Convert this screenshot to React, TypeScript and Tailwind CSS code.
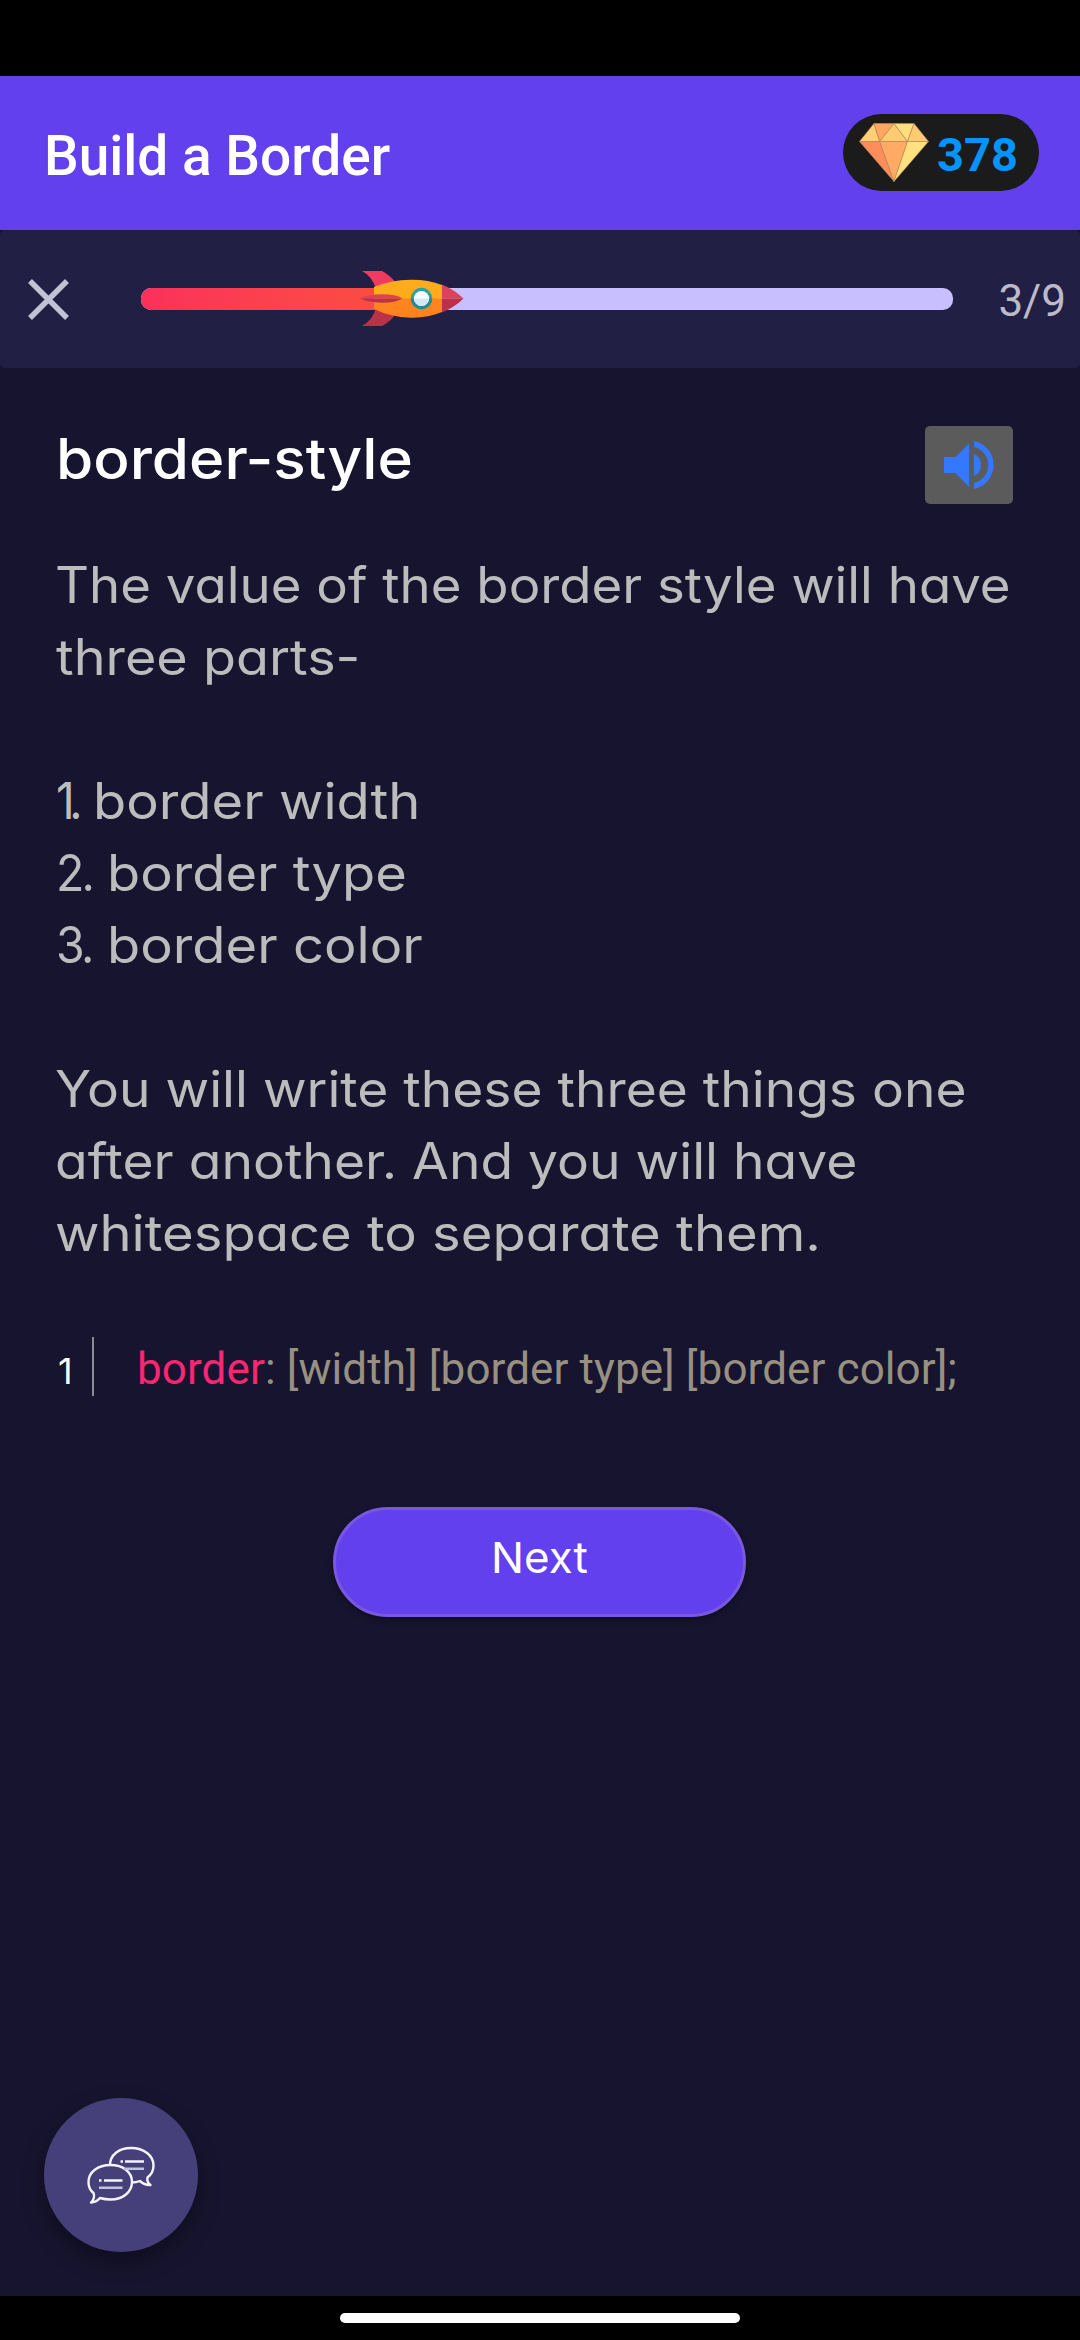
const inter = "font-['Inter','Noto_Sans',sans-serif] [font-feature-settings:'cv11'] whitespace-pre";

function Gem() {
  return (
    <svg className="h-[59px] w-[70px]" viewBox="0 0 70 59">
      <g stroke="#b98a55" strokeWidth="0.6" strokeLinejoin="round">
        <path d="M0.5 18.5 15 .5 20.7 18.5Z" fill="#ffcf76" />
        <path d="M15 .5H35L20.7 18.5Z" fill="#ffa762" />
        <path d="M35 .5 48.5 18.5H20.7Z" fill="#ffcb70" />
        <path d="M35 .5H55L48.5 18.5Z" fill="#ffdf7d" />
        <path d="M55 .5 69.5 18.5H48.5Z" fill="#ffcb70" />
        <path d="M.5 18.5H20.7L35 58.5Z" fill="#ff8d5a" />
        <path d="M20.7 18.5H48.5L35 58.5Z" fill="#ffab66" />
        <path d="M48.5 18.5H69.5L35 58.5Z" fill="#ffe180" />
      </g>
    </svg>
  );
}

function Rocket() {
  return (
    <svg className="absolute -top-[17px] left-[219px] h-[55px] w-[104px]" viewBox="0 0 104 55">
      <path d="M2 0H22Q30 4 36 12L16 18Q12 5 2 0Z" fill="#f03a5f" />
      <path d="M2 55H22Q30 51 36 43L16 37Q12 50 2 55Z" fill="#b93248" />
      <path d="M14 16Q30 9 51 8.700Q68 8.500 82 14V28H14Z" fill="#ffac1c" />
      <path d="M14 27.500H82V41Q68 47 51 46.700Q30 46 14 38Z" fill="#ff8420" />
      <path d="M82 13.500Q95 19 103.500 27.500H82Z" fill="#dd4259" />
      <path d="M82 41.500Q95 36 103.500 27.500H82Z" fill="#b93248" />
      <path d="M0 27.500Q8 23.500 22 23.300Q36 23.300 42.500 27.500Z" fill="#dd4259" />
      <path d="M0 27.500Q8 31.500 22 31.700Q36 31.700 42.500 27.500Z" fill="#b93248" />
      <circle cx="61.500" cy="27.500" r="10.700" fill="#2aa3a5" />
      <path d="M50.800 27.500a10.700 10.700 0 0 0 21.400 0Z" fill="#25898f" />
      <circle cx="61.500" cy="27.500" r="7.600" fill="#fff" />
      <path d="M53.900 27.500a7.600 7.600 0 0 0 15.200 0Z" fill="#cfe9f9" />
    </svg>
  );
}

function Speaker() {
  return (
    <svg className="h-[50px] w-[52px]" viewBox="0 0 52 50" fill="#3378ff">
      <path d="M1 17H12.500L26 3.500V47L12.500 33H1Z" />
      <path d="M31 14Q38 17.500 38 25T31 36Z" />
      <path d="M31 1A24.500 24.500 0 0 1 31 49V43A18.500 18.500 0 0 0 31 7Z" />
    </svg>
  );
}

function Chat() {
  return (
    <svg className="h-[58px] w-[68px]" viewBox="0 0 68 58" fill="none" stroke="#f5f3ff" strokeWidth="2.400" strokeLinejoin="round">
      <path d="M23 19C23 9 32 2 44 2C57 2 66.500 9.500 66.500 19.500Q66.500 27 60.500 31.500Q59.500 36 63.500 39Q58 39.500 53 35Q49 36.500 45 36.500" />
      <path d="M23.500 19C36 19 45 26 45 36C45 46 36 53.500 23.500 53.500Q18 53.500 13 52Q9 56.500 4 56.500Q8.500 52 6.500 47Q1.500 43 1.500 36C1.500 26 11 19 23.500 19Z" />
      <path d="M12 34.500H14.500M17 34.500H35.500M33.500 15.500H36M38 15.500H57" strokeWidth="2.500" />
      <path d="M12 41.800H35.500M37 22.800H57" stroke="#c3c0e0" strokeWidth="2.500" />
    </svg>
  );
}

type Line = { marker?: string; markerStyle?: string; text: string; scale: string };

const lines: Line[] = [
  { text: "The value of the border style will have", scale: "-ml-[1px] scale-x-[1.055]" },
  { text: "three parts-", scale: "scale-x-[1.078]" },
  { text: " ", scale: "" },
  { marker: "1.", markerStyle: "w-[37px] tracking-[-6px] scale-x-[0.92]", text: "border width", scale: "scale-x-[1.086]" },
  { marker: "2.", markerStyle: "w-[51px] tracking-[-3px] scale-x-[0.93]", text: "border type", scale: "scale-x-[1.085]" },
  { marker: "3.", markerStyle: "w-[51px] tracking-[-3px] scale-x-[0.93]", text: "border color", scale: "scale-x-[1.086]" },
  { text: " ", scale: "" },
  { text: "You will write these three things one", scale: "-ml-[1px] scale-x-[1.066]" },
  { text: "after another. And you will have", scale: "-ml-[1px] scale-x-[1.067]" },
  { text: "whitespace to separate them.", scale: "-ml-[1px] scale-x-[1.087]" },
];

export default function App() {
  return (
    <div className="flex h-[2340px] w-[1080px] flex-col overflow-hidden bg-[#17142f] font-['Roboto',sans-serif]">
      <div className="h-[76px] shrink-0 bg-black" />
      <header className="flex h-[154px] shrink-0 items-center justify-between bg-[#6240ee] pr-[41px] pl-[44px]">
        <h1 className="pt-[6px] text-[55px] leading-[64px] font-medium whitespace-pre text-white">Build a Border</h1>
        <div className="mb-[1px] flex h-[77px] w-[196px] items-center rounded-full bg-[#1b1b1b] pl-[16px]">
          <Gem />
          <span className="ml-[8px] pt-[5px] text-[47px] leading-[56px] font-bold text-[#0593fc]">378</span>
        </div>
      </header>
      <div className="flex h-[138px] shrink-0 items-center rounded-[5px] bg-[#221f44] pr-[14px] pl-[28px]">
        <svg className="h-[41px] w-[41px]" viewBox="0 0 41 41" stroke="#c2c2d3" strokeWidth="5.500">
          <path d="M2 2 39 39M39 2 2 39" />
        </svg>
        <div className="relative ml-[72px] h-[22px] w-[812px] rounded-[10px] bg-[#c8bfff]">
          <div className="h-full w-[270px] rounded-l-[10px] bg-linear-to-r from-[#fb305b] to-[#fb503b]" />
          <Rocket />
        </div>
        <span className="ml-auto pt-[3px] text-[44px] leading-[52px] text-[#bcb9c8]">3/9</span>
      </div>

      <main className="flex grow flex-col pr-[67px] pl-[56px]">
        <div className="flex h-[181px] shrink-0 items-start justify-between">
          <h2 className={`${inter} mt-[53px] origin-left scale-x-[1.076] text-[56px] leading-[76px] font-medium text-white`}>
            border-style
          </h2>
          <button className="mt-[58px] flex h-[78px] w-[88px] items-center justify-center rounded-[5px] bg-[#5b5b5c]">
            <Speaker />
          </button>
        </div>
        <div className={`${inter} text-[50px] leading-[72px] text-[#bcbcbc]`}>
          {lines.map((line, i) => (
            <p key={i} className="flex h-[72px]">
              {line.marker && <span className={`shrink-0 origin-left ${line.markerStyle}`}>{line.marker}</span>}
              <span className={`origin-left ${line.scale}`}>{line.text}</span>
            </p>
          ))}
        </div>
        <div className="mt-[68px] flex h-[59px] shrink-0 items-center">
          <span className={`${inter} w-[36px] pt-[9px] pl-[2px] text-[36px] leading-[44px] text-white`}>1</span>
          <div className="h-[59px] w-[2px] bg-[#8b8996]" />
          <code className="ml-[43px] pt-[4px] font-['Roboto',sans-serif] text-[44px] leading-[52px] tracking-[0.09px] whitespace-pre text-[#989081]">
            <span className="text-[#f92672]">border</span>: [width] [border type] [border color];
          </code>
        </div>
        <button className="mt-[111px] ml-[277px] flex h-[110px] w-[413px] shrink-0 items-center justify-center rounded-full border-[3px] border-[#7858e0] bg-[#6240ee] pb-[11px] shadow-[0_3px_6px_rgba(0,0,0,0.35)]">
          <span className={`${inter} scale-x-[1.02] text-[43px] leading-[60px] text-white`}>Next</span>
        </button>
        <button className="mt-auto -ml-[12px] mb-[44px] flex h-[154px] w-[154px] shrink-0 items-center justify-center rounded-full bg-[#454079] shadow-[0_10px_22px_rgba(0,0,0,0.35)]">
          <Chat />
        </button>
      </main>

      <div className="flex h-[44px] shrink-0 justify-center bg-black pt-[17px]">
        <div className="h-[10px] w-[400px] rounded-full bg-white" />
      </div>
    </div>
  );
}
